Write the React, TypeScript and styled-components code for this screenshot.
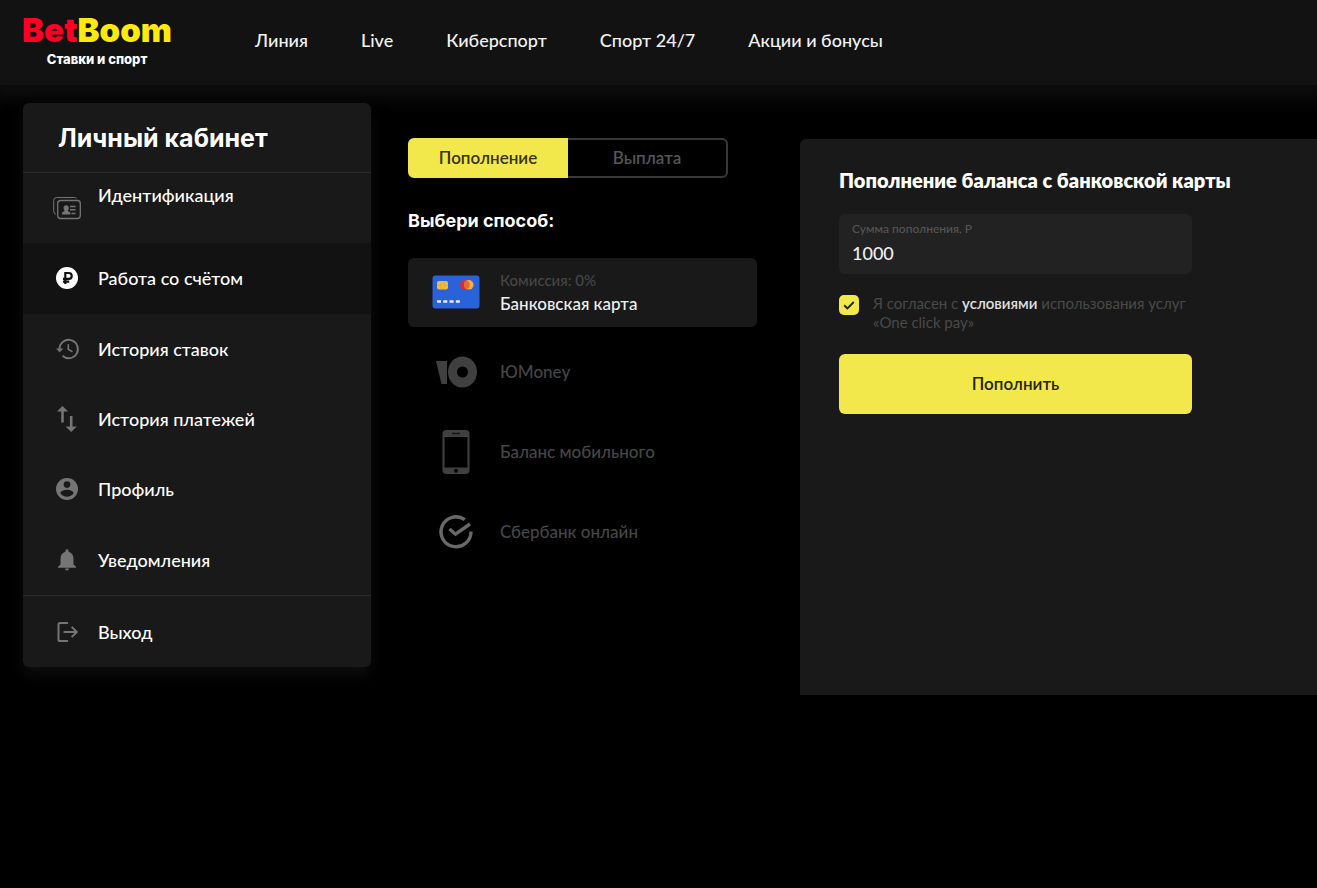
import React from "react";
import styled, { createGlobalStyle, css } from "styled-components";

const GlobalStyle = createGlobalStyle`
  *, *::before, *::after { box-sizing: border-box; }
  body {
    margin: 0;
    background: #000;
    color: #fff;
    font-family: Lato, "Liberation Sans", sans-serif;
    font-size: 18px;
    line-height: 24px;
  }
  button, input { font: inherit; color: inherit; }
  a { color: inherit; text-decoration: none; }
  h1, h2, p { margin: 0; }
`;

const displayFont = `Inter, "Liberation Sans", sans-serif`;

const Page = styled.div`
  min-height: 100vh;
`;

const Header = styled.header`
  display: flex;
  align-items: center;
  gap: 84px;
  height: 85px;
  padding: 0 23px 6px;
  background: #121212;
  box-shadow: 0 4px 18px 10px #0e0e0e;
`;

const Logo = styled.a`
  display: flex;
  flex-direction: column;
  align-items: center;
  gap: 2px;
  width: 148px;
  font-family: ${displayFont};
`;

const LogoName = styled.span`
  color: #ff0024;
  font-size: 33px;
  font-weight: 900;
  line-height: 36px;
`;

const LogoAccent = styled.span`
  color: #fde80f;
`;

const LogoTagline = styled.span`
  font-size: 13px;
  font-weight: 800;
  line-height: 18px;
`;

const TopNav = styled.nav`
  display: flex;
  gap: 53px;
  font-weight: 500;
  color: #f2f2f2;
  white-space: nowrap;
`;

const Body = styled.div`
  display: flex;
  align-items: flex-start;
  gap: 37px;
  padding: 18px 0 0 23px;
`;

const Sidebar = styled.aside`
  flex: none;
  width: 348px;
  border-radius: 6px;
  background: #191919;
  box-shadow: 0 8px 16px #0e0e0e;
`;

const SidebarTitle = styled.h1`
  padding: 19px 35px 17px;
  border-bottom: 1px solid #2b2b2b;
  font-family: ${displayFont};
  font-size: 25px;
  font-weight: 700;
  line-height: 33px;
`;

const Menu = styled.nav`
  display: grid;
  grid-auto-rows: 1fr;
  height: 422px;
`;

const MenuLink = styled.a<{ $active?: boolean; $top?: boolean }>`
  display: flex;
  align-items: ${(p) => (p.$top ? "flex-start" : "center")};
  gap: 17px;
  padding: ${(p) => (p.$top ? "10px" : "0")} 30px 0;
  background: ${(p) => (p.$active ? "#121212" : "transparent")};
  font-weight: 500;
  svg { flex: none; color: ${(p) => (p.$active ? "#fff" : "#757575")}; }
  ${(p) => p.$top && css`svg { margin-top: 11px; }`}
`;

const Exit = styled.div`
  display: grid;
  height: 72px;
  border-top: 1px solid #2b2b2b;
`;

const Methods = styled.section`
  flex: none;
  width: 349px;
  padding-top: 35px;
`;

const Tabs = styled.div`
  display: grid;
  grid-template-columns: 1fr 1fr;
  width: 320px;
  height: 40px;
`;

const Tab = styled.button<{ $active?: boolean }>`
  padding: 0;
  border: 2px solid ${(p) => (p.$active ? "#f3e84b" : "#383838")};
  border-left-width: ${(p) => (p.$active ? "2px" : "0")};
  border-radius: ${(p) => (p.$active ? "6px 0 0 6px" : "0 6px 6px 0")};
  background: ${(p) => (p.$active ? "#f3e84b" : "transparent")};
  color: ${(p) => (p.$active ? "#37340f" : "#555")};
  font-size: 17px;
  font-weight: 600;
`;

const MethodsTitle = styled.h2`
  margin: 31px 0 25px;
  font-family: ${displayFont};
  font-size: 18px;
  font-weight: 700;
  line-height: 24px;
`;

const MethodList = styled.div`
  display: grid;
  gap: 11px;
`;

const Method = styled.button<{ $active?: boolean }>`
  display: grid;
  grid-template-columns: 48px 1fr;
  align-items: center;
  justify-items: center;
  gap: 20px;
  height: 69px;
  padding: 0 24px 2px;
  border: 0;
  border-radius: 6px;
  background: ${(p) => (p.$active ? "#191919" : "transparent")};
  color: ${(p) => (p.$active ? "#f0f0f0" : "#464646")};
  font-size: 17px;
  font-weight: 500;
  text-align: left;
  svg { color: #404040; }
`;

const MethodText = styled.span`
  display: grid;
  justify-self: stretch;
`;

const Muted = styled.span`
  color: #464646;
  font-size: 15px;
`;

const Panel = styled.form`
  flex: 1;
  min-width: 0;
  min-height: 556px;
  margin: 36px 0 0 6px;
  padding: 29px 39px;
  border-radius: 6px 0 0 0;
  background: #191919;
`;

const PanelTitle = styled.h2`
  font-size: 20px;
  font-weight: 800;
  line-height: 24px;
`;

const Fields = styled.div`
  display: grid;
  gap: 20px;
  max-width: 353px;
  margin-top: 22px;
`;

const AmountField = styled.label`
  display: grid;
  align-content: start;
  height: 60px;
  padding: 5px 13px;
  border-radius: 6px;
  background: #222;
  color: #555;
  font-size: 12px;
  font-weight: 500;
  line-height: 20px;
`;

const AmountInput = styled.input`
  width: 100%;
  height: 28px;
  padding: 0;
  border: 0;
  outline: 0;
  background: transparent;
  color: #f0f0f0;
  font-size: 18px;
  font-weight: 500;
`;

const Consent = styled.label`
  display: grid;
  grid-template-columns: 20px 1fr;
  gap: 14px;
  margin-bottom: 2px;
  color: #4a4a4a;
  font-size: 15px;
  font-weight: 400;
  line-height: 19px;
`;

const TickBox = styled.span`
  display: grid;
  width: 20px;
  height: 20px;
  margin-top: 1px;
  > * { grid-area: 1 / 1; }
  svg { pointer-events: none; }
`;

const Tick = styled.input`
  appearance: none;
  width: 20px;
  height: 20px;
  margin: 0;
  border-radius: 5px;
  background: #f3e84b;
`;

const Terms = styled.a`
  color: #e0e0e0;
  font-weight: 600;
`;

const Submit = styled.button`
  height: 60px;
  padding: 0;
  border: 0;
  border-radius: 6px;
  background: #f3e84b;
  color: #26240c;
  font-size: 17px;
  font-weight: 600;
`;

const IdIcon = () => (
  <svg width="28" height="28" viewBox="0 0 28 28" fill="none" stroke="currentColor" aria-hidden="true">
    <path d="M3 20.500Q.7 19.500.7 17V6.500Q.7 3.500 3.700 3.500H21.500Q23 3.500 23.500 4.500" />
    <rect x="4.700" y="6.500" width="22.600" height="18" rx="3" strokeWidth="1.300" />
    <path d="M9 20.500v-1.500q0-1.200 2.400-1.800v-1q-.8-1-.8-2.500 0-2.500 2.600-2.500t2.600 2.500q0 1.500-.8 2.500v1q2.400.6 2.400 1.800v1.500z" fill="currentColor" stroke="none" />
    <path d="M17 12.500h5.500M17 15.800h5.500M18.500 19.500h4" strokeWidth="1.600" />
  </svg>
);

const RubleIcon = () => (
  <svg width="28" height="28" viewBox="0 0 28 28" fill="none" aria-hidden="true">
    <circle cx="14" cy="14" r="11" fill="currentColor" />
    <path d="M12.300 20V9h3.500a2.900 2.900 0 0 1 0 5.800H10M10 17.600h6.200" stroke="#121212" strokeWidth="2.200" />
  </svg>
);

const HistoryIcon = () => (
  <svg width="28" height="28" viewBox="0 0 28 28" fill="none" stroke="currentColor" strokeWidth="1.900" aria-hidden="true">
    <path d="M6.500 14.500V14a9.200 9.200 0 1 1 3 6.800" />
    <path d="M3 13.500h7.400l-3.700 3.700z" fill="currentColor" stroke="none" />
    <path d="M15.300 9.300v5l4.200 2.600" strokeWidth="1.600" />
  </svg>
);

const TransferIcon = () => (
  <svg width="28" height="28" viewBox="0 0 28 28" fill="none" stroke="currentColor" strokeWidth="2.600" aria-hidden="true">
    <path d="M9.500 5v12.500M18.200 11v12" />
    <path d="M3.900 6.600L9.500 1l5.600 5.600zM12.600 21.400h11.200L18.200 27z" fill="currentColor" stroke="none" />
  </svg>
);

const ProfileIcon = () => (
  <svg width="28" height="28" viewBox="0 0 28 28" aria-hidden="true">
    <circle cx="14" cy="14" r="11" fill="currentColor" />
    <circle cx="14" cy="9.600" r="3.300" fill="#191919" />
    <path d="M7.400 18.200c0-2.200 4.400-3.400 6.600-3.400s6.600 1.200 6.600 3.400a7.900 7.900 0 0 1-13.200 0z" fill="#191919" />
  </svg>
);

const BellIcon = () => (
  <svg width="28" height="28" viewBox="0 0 28 28" fill="currentColor" aria-hidden="true">
    <path d="M14 24.500a2 2 0 0 0 2-2h-4a2 2 0 0 0 2 2zM20.500 18.500v-6c0-3.400-1.800-6-4.900-6.800v-.8a1.600 1.600 0 0 0-3.200 0v.8c-3.100.8-4.900 3.400-4.900 6.800v6L5 20.800v1h18v-1z" />
  </svg>
);

const ExitIcon = () => (
  <svg width="28" height="28" viewBox="0 0 28 28" fill="none" stroke="currentColor" strokeWidth="2" aria-hidden="true">
    <path d="M15 4.900H7Q5.500 4.900 5.500 6.500v15Q5.500 23.100 7 23.100h8M10.500 14h13M18.700 8.900L23.800 14l-5.100 5.100" />
  </svg>
);

const CardIcon = () => (
  <svg width="48" height="34" viewBox="0 0 48 34" aria-hidden="true">
    <rect x=".5" y=".5" width="47" height="33" rx="3" fill="#2a62d9" />
    <rect x="5" y="6" width="11" height="8.500" rx="2" fill="#f0bc3c" />
    <path d="M9 6v8.500M12 6v8.500M5 10h4M12 10h4" stroke="#d99f30" strokeWidth=".6" />
    <circle cx="32.800" cy="9.800" r="4.800" fill="#d0303a" />
    <circle cx="36.800" cy="9.800" r="4.800" fill="#f3b04a" />
    <path d="M34.800 5.400a4.800 4.800 0 0 1 0 8.800 4.800 4.800 0 0 1 0-8.800z" fill="#ea6a32" />
    <path d="M5 26.500h24" stroke="#e8f0ff" strokeWidth="2.600" strokeDasharray="4 2.300" />
  </svg>
);

const YooIcon = () => (
  <svg width="42" height="32" viewBox="0 0 42 32" fill="currentColor" aria-hidden="true">
    <path d="M1 5h11v23H6.500z" />
    <path fillRule="evenodd" d="M27.500 .5a14.500 15.500 0 1 1 0 31 14.500 15.500 0 0 1 0-31zm0 10a5.500 5.500 0 1 0 0 11 5.500 5.500 0 0 0 0-11z" />
  </svg>
);

const PhoneIcon = () => (
  <svg width="28" height="46" viewBox="0 0 28 46" aria-hidden="true">
    <rect x=".5" y="1" width="27" height="44" rx="4" fill="currentColor" />
    <path d="M2.500 8h23v30.500h-23z" fill="#000" />
    <path d="M10 4.500h8" stroke="#161616" strokeWidth="1.500" />
    <circle cx="14" cy="41.700" r="2" fill="#000" />
  </svg>
);

const SberIcon = () => (
  <svg width="34" height="34" viewBox="0 0 34 34" fill="none" stroke="#686868" strokeWidth="3.400" aria-hidden="true">
    <path d="M25.800 4.600A15 15 0 1 0 32 16.500" />
    <path d="M10.500 14l6 5.200L31 9" />
  </svg>
);

const topLinks = ["Линия", "Live", "Киберспорт", "Спорт 24/7", "Акции и бонусы"];

const menu = [
  { label: "Идентификация", Icon: IdIcon, top: true },
  { label: "Работа со счётом", Icon: RubleIcon, active: true },
  { label: "История ставок", Icon: HistoryIcon },
  { label: "История платежей", Icon: TransferIcon },
  { label: "Профиль", Icon: ProfileIcon },
  { label: "Уведомления", Icon: BellIcon },
];

const methods = [
  { label: "Банковская карта", note: "Комиссия: 0%", Icon: CardIcon },
  { label: "ЮMoney", Icon: YooIcon },
  { label: "Баланс мобильного", Icon: PhoneIcon },
  { label: "Сбербанк онлайн", Icon: SberIcon },
];

export default function App() {
  return (
    <Page>
      <GlobalStyle />
      <Header>
        <Logo href="#">
          <LogoName>Bet<LogoAccent>Boom</LogoAccent></LogoName>
          <LogoTagline>Ставки и спорт</LogoTagline>
        </Logo>
        <TopNav>
          {topLinks.map((label) => <a key={label} href="#">{label}</a>)}
        </TopNav>
      </Header>
      <Body>
        <Sidebar>
          <SidebarTitle>Личный кабинет</SidebarTitle>
          <Menu>
            {menu.map(({ label, Icon, active, top }) => (
              <MenuLink key={label} href="#" $active={active} $top={top}>
                <Icon />
                {label}
              </MenuLink>
            ))}
          </Menu>
          <Exit>
            <MenuLink href="#"><ExitIcon />Выход</MenuLink>
          </Exit>
        </Sidebar>
        <Methods>
          <Tabs>
            <Tab type="button" $active>Пополнение</Tab>
            <Tab type="button">Выплата</Tab>
          </Tabs>
          <MethodsTitle>Выбери способ:</MethodsTitle>
          <MethodList>
            {methods.map(({ label, note, Icon }) => (
              <Method key={label} type="button" $active={Boolean(note)}>
                <Icon />
                <MethodText>
                  {note && <Muted>{note}</Muted>}
                  {label}
                </MethodText>
              </Method>
            ))}
          </MethodList>
        </Methods>
        <Panel onSubmit={(e) => e.preventDefault()}>
          <PanelTitle>Пополнение баланса с банковской карты</PanelTitle>
          <Fields>
            <AmountField>
              Сумма пополнения, Р
              <AmountInput defaultValue="1000" inputMode="numeric" />
            </AmountField>
            <Consent>
              <TickBox>
                <Tick type="checkbox" defaultChecked />
                <svg width="20" height="20" viewBox="0 0 20 20" fill="none" stroke="#26240c" strokeWidth="2" aria-hidden="true">
                  <path d="M5.200 10.200l3.200 3.200 6.400-6.400" />
                </svg>
              </TickBox>
              <span>
                Я согласен с <Terms href="#">условиями</Terms> использования услуг «One click pay»
              </span>
            </Consent>
            <Submit type="submit">Пополнить</Submit>
          </Fields>
        </Panel>
      </Body>
    </Page>
  );
}
